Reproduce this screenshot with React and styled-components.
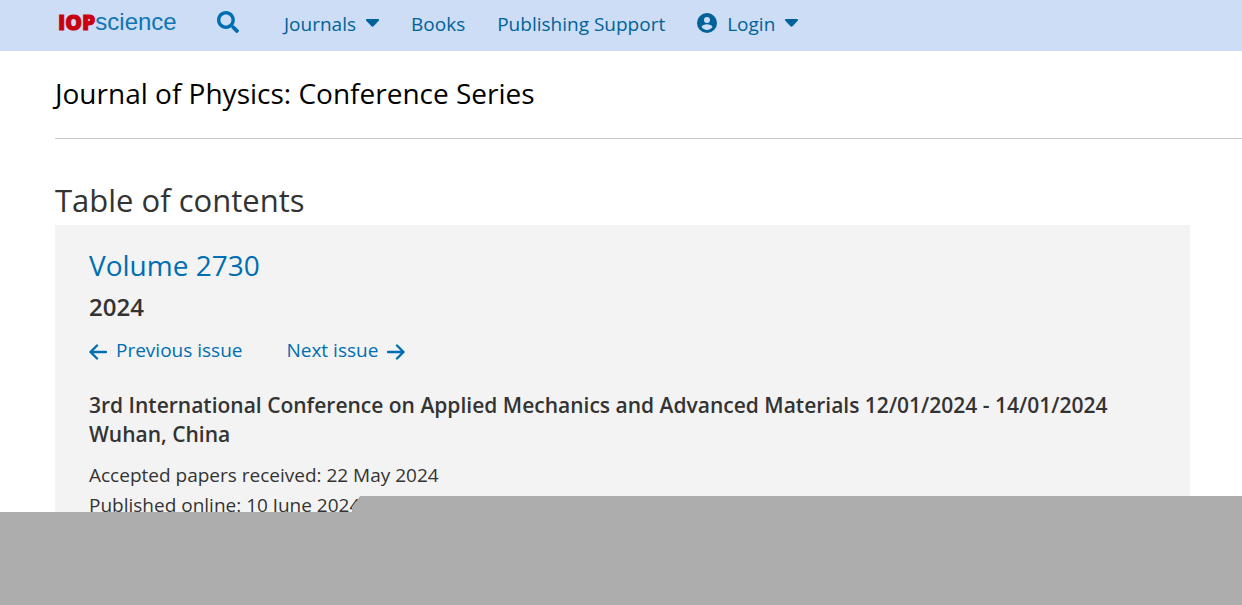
import React from "react";
import styled, { createGlobalStyle } from "styled-components";
import { FaSearch } from "react-icons/fa";

const GlobalStyle = createGlobalStyle`
  * {
    box-sizing: border-box;
  }
  body {
    margin: 0;
    background-color: #fff;
    color: #333;
    font-family: "Open Sans", "Noto Sans", sans-serif;
    font-size: 19px;
  }
  h1, h2, h3, p {
    margin: 0;
    font-weight: 400;
  }
  a {
    color: #006eb2;
    text-decoration: none;
  }
`;

const Page = styled.div`
  position: relative;
  height: 100vh;
  overflow: hidden;
`;

const Header = styled.header`
  display: flex;
  align-items: center;
  height: 51px;
  padding: 0 58px 8px;
  background-color: #ccddf5;
`;

const Logo = styled.a`
  display: flex;
  align-items: baseline;
  width: 159px;
  color: #0f75b5;
  font-family: "Liberation Sans Narrow", "Liberation Sans", sans-serif;
  font-size: 24px;
  line-height: 32px;
  strong {
    color: #c8000f;
    font-family: "Open Sans", sans-serif;
    font-size: 21px;
    font-weight: 800;
    -webkit-text-stroke: 1px #c8000f;
  }
`;

const SearchButton = styled.button`
  display: flex;
  width: 67px;
  padding: 0;
  border: 0;
  background: none;
  color: #006eb2;
  font-size: 22px;
`;

const Nav = styled.nav`
  display: flex;
  align-items: center;
  gap: 32px;
  padding-top: 4px;
`;

const NavItem = styled.a`
  display: flex;
  align-items: center;
  gap: 10px;
  color: #00629b;
  line-height: 28px;
  svg {
    margin-bottom: 2px;
  }
`;

const Main = styled.main`
  padding-left: 55px;
`;

const JournalTitle = styled.h1`
  padding: 20px 0 23px;
  border-bottom: 1px solid #ccc;
  color: #000;
  font-size: 28px;
  line-height: 44px;
`;

const Contents = styled.section`
  margin: 37px 52px 0 0;
  h2 {
    padding-bottom: 1px;
    font-size: 31px;
    line-height: 48px;
  }
`;

const Volume = styled.div`
  padding: 18px 34px 120px;
  background-color: #f3f3f3;
  p {
    line-height: 30px;
  }
`;

const VolumeTitle = styled.h3`
  font-size: 28px;
  line-height: 44px;
`;

const Year = styled.p`
  && {
    font-size: 24px;
    font-weight: 600;
    line-height: 40px;
  }
`;

const Issues = styled.div`
  display: flex;
  gap: 44px;
  padding: 8px 0 26px;
  a {
    display: flex;
    align-items: center;
    gap: 9px;
    line-height: 30px;
  }
  svg {
    margin-top: 4px;
  }
`;

const Conference = styled.p`
  && {
    margin-bottom: 11px;
    font-size: 21px;
    font-weight: 600;
    line-height: 29px;
  }
`;

const Cover = styled.div`
  position: absolute;
  right: 0;
  bottom: 0;
  left: 0;
  height: 109px;
  background-color: #adadad;
  clip-path: polygon(360px 0, 100% 0, 100% 100%, 0 100%, 0 16px, 352px 16px, 352px 12px);
`;

const Caret = () => (
  <svg width="13" height="8" viewBox="0 0 13 8" fill="currentColor">
    <path d="M1 0h11c.9 0 1.300 1 .7 1.700L7.500 7.300c-.6.6-1.400.6-2 0L.3 1.700C-.3 1 .1 0 1 0z" />
  </svg>
);

const UserIcon = () => (
  <svg width="20" height="20" viewBox="0 0 20 20">
    <circle cx="10" cy="10" r="10" fill="currentColor" />
    <circle cx="10" cy="7" r="3" fill="#ccddf5" />
    <path
      d="M4.500 14c.6-1.900 3-2.800 5.500-2.800s4.900.9 5.500 2.800c-1.200 1.800-3.200 2.900-5.500 2.900S5.700 15.800 4.500 14z"
      fill="#ccddf5"
    />
  </svg>
);

const Arrow = ({ path }) => (
  <svg
    width="18"
    height="16"
    viewBox="0 0 18 16"
    fill="none"
    stroke="currentColor"
    strokeWidth="2.400"
    strokeLinecap="round"
    strokeLinejoin="round"
  >
    <path d={path} />
  </svg>
);

const App = () => {
  return (
    <Page>
      <GlobalStyle />
      <Header>
        <Logo href="#" aria-label="IOPscience">
          <strong>IOP</strong>science
        </Logo>
        <SearchButton aria-label="Search">
          <FaSearch />
        </SearchButton>
        <Nav>
          <NavItem href="#">
            Journals <Caret />
          </NavItem>
          <NavItem href="#">Books</NavItem>
          <NavItem href="#">Publishing Support</NavItem>
          <NavItem href="#">
            <UserIcon /> Login <Caret />
          </NavItem>
        </Nav>
      </Header>
      <Main>
        <JournalTitle>Journal of Physics: Conference Series</JournalTitle>
        <Contents>
          <h2>Table of contents</h2>
          <Volume>
            <VolumeTitle>
              <a href="#">Volume 2730</a>
            </VolumeTitle>
            <Year>2024</Year>
            <Issues>
              <a href="#">
                <Arrow path="M8 1.500 1.500 8 8 14.500M1.500 8H17" /> Previous issue
              </a>
              <a href="#">
                Next issue <Arrow path="M10 1.500 16.500 8 10 14.500M16.500 8H1" />
              </a>
            </Issues>
            <Conference>
              3rd International Conference on Applied Mechanics and Advanced
              Materials 12/01/2024 - 14/01/2024
              <br />
              Wuhan, China
            </Conference>
            <p>Accepted papers received: 22 May 2024</p>
            <p>Published online: 10 June 2024</p>
          </Volume>
        </Contents>
      </Main>
      <Cover />
    </Page>
  );
};

export default App;
